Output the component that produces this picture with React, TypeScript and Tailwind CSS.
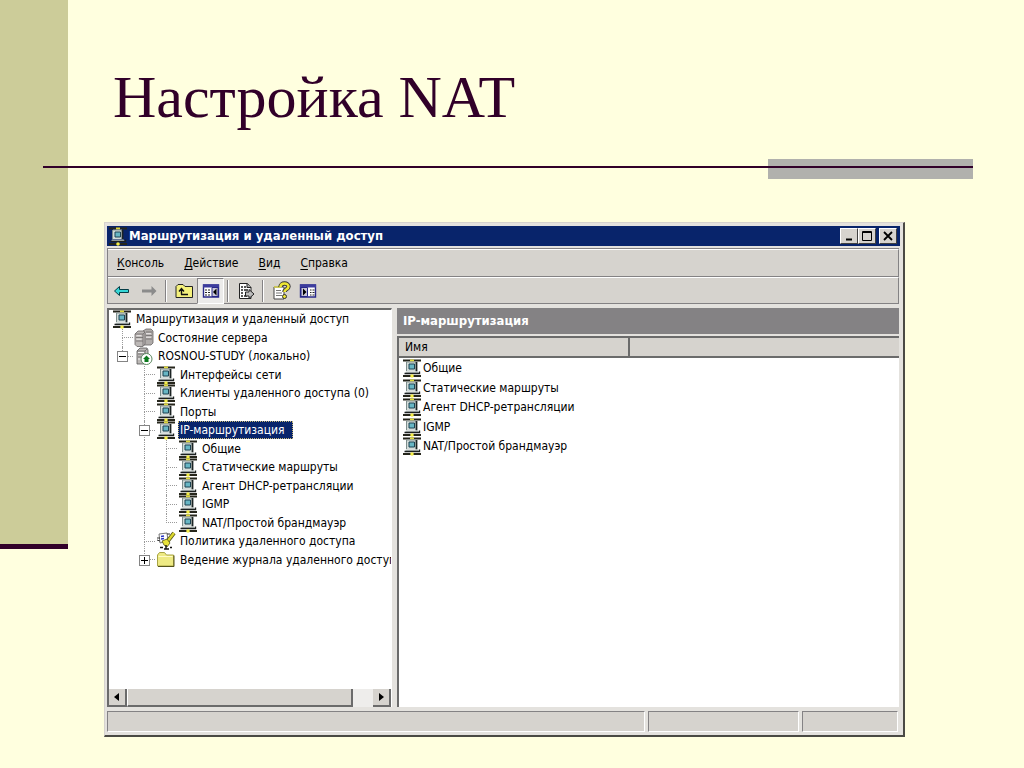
import type { ReactNode } from "react";
import clsx from "clsx";

type Guide = "none" | "line" | "tee" | "corner";
type IconName = "network" | "servers" | "server" | "policy" | "folder";

type TreeRow = {
  label: string;
  icon: IconName;
  guides: Guide[];
  toggle?: "plus" | "minus";
  selected?: boolean;
};

const TREE: TreeRow[] = [
  { label: "Маршрутизация и удаленный доступ", icon: "network", guides: [] },
  { label: "Состояние сервера", icon: "servers", guides: ["tee"] },
  { label: "ROSNOU-STUDY (локально)", icon: "server", guides: ["corner"], toggle: "minus" },
  { label: "Интерфейсы сети", icon: "network", guides: ["none", "tee"] },
  { label: "Клиенты удаленного доступа (0)", icon: "network", guides: ["none", "tee"] },
  { label: "Порты", icon: "network", guides: ["none", "tee"] },
  { label: "IP-маршрутизация", icon: "network", guides: ["none", "tee"], toggle: "minus", selected: true },
  { label: "Общие", icon: "network", guides: ["none", "line", "tee"] },
  { label: "Статические маршруты", icon: "network", guides: ["none", "line", "tee"] },
  { label: "Агент DHCP-ретрансляции", icon: "network", guides: ["none", "line", "tee"] },
  { label: "IGMP", icon: "network", guides: ["none", "line", "tee"] },
  { label: "NAT/Простой брандмауэр", icon: "network", guides: ["none", "line", "corner"] },
  { label: "Политика удаленного доступа", icon: "policy", guides: ["none", "tee"] },
  { label: "Ведение журнала удаленного доступа", icon: "folder", guides: ["none", "corner"], toggle: "plus" },
];

const ITEMS = ["Общие", "Статические маршруты", "Агент DHCP-ретрансляции", "IGMP", "NAT/Простой брандмауэр"];

const MENU = ["Консоль", "Действие", "Вид", "Справка"];

function NetworkIcon() {
  return (
    <svg width="20" height="20" viewBox="0 0 20 20" className="shrink-0" aria-hidden="true">
      <path d="M1 2.500h18M1 18h18" stroke="#26261c" strokeWidth="1.800" />
      <path d="M8 1.500h4v2H8z" fill="#dfd83c" />
      <path d="M5 4h9v9H5z" fill="#d3dcda" />
      <path d="M5 4h9" stroke="#8c9a98" />
      <path d="M4.500 4v9" stroke="#7d8d8b" />
      <path d="M14.500 4v9.500" stroke="#1c2424" strokeWidth="1.800" />
      <path d="M7 6h5.500v5H7z" fill="#67b6c4" stroke="#1d4352" />
      <path d="M4 13.500h11.500l1.500 2H3z" fill="#b9c2c0" />
      <path d="M2.500 15.500h15v-2" stroke="#1c2020" strokeWidth="1.400" fill="none" />
      <circle cx="10" cy="18" r="1.800" fill="#f5ee48" />
    </svg>
  );
}

function ServersIcon() {
  return (
    <svg width="20" height="20" viewBox="0 0 20 20" className="shrink-0" aria-hidden="true">
      <path d="M9 3l3-2h5l2 2v12l-2 2h-8z" fill="#b0acaa" stroke="#6a6666" strokeWidth=".8" />
      <path d="M1 6l3-3h6l1 2v11l-2 2.500H3l-2-2z" fill="#bcb8b6" stroke="#6a6666" strokeWidth=".8" />
      <path d="M1 6h8v12M9 6l2-2M12 4h6M12 7.500h6M12 11h6M2 9.500h7M2 13h7" stroke="#6f6b6b" fill="none" strokeWidth=".8" />
      <path d="M2.500 7.700h5M2.500 11.200h5M12 5.700h5M12 9.200h5" stroke="#efecec" />
    </svg>
  );
}

function ServerIcon() {
  return (
    <svg width="20" height="20" viewBox="0 0 20 20" className="shrink-0" aria-hidden="true">
      <path d="M3 5l3-3h7l1 2v12l-2 2H3z" fill="#bcb8b6" stroke="#555" strokeWidth=".8" />
      <path d="M3 5h8v5M11 5l2-2M4 8h6M4 11h4" stroke="#666" strokeWidth=".8" fill="none" />
      <path d="M4 6.500h6M4 13h3" stroke="#f4f4f4" />
      <circle cx="12.500" cy="13" r="5.500" fill="#fff" stroke="#5d8a62" />
      <path d="M12.500 9.500L16 13h-1.500v3h-4v-3H9z" fill="#0b7a1d" />
    </svg>
  );
}

function PolicyIcon() {
  return (
    <svg width="20" height="20" viewBox="0 0 20 20" className="shrink-0" aria-hidden="true">
      <path d="M3 3l8-1 1 8-8 2z" fill="#fff" stroke="#555" strokeWidth=".8" />
      <path d="M5 5.500l3-.5M5 8l3-.5" stroke="#2834c0" strokeWidth="1.400" />
      <path d="M1 7h3M1 9l3 1M11 3h3" stroke="#333" />
      <path d="M18 2l-7 9" stroke="#55551a" strokeWidth="4" />
      <path d="M18 2l-7 9" stroke="#dcd82e" strokeWidth="2.400" />
      <path d="M6 10l5-2 3 4-3 4-3-2z" fill="#e8e23a" stroke="#55551a" strokeWidth=".8" />
      <path d="M4 16.500h3M8 18h5M14 16.500h2M10 14v4" stroke="#111" strokeWidth="1.400" />
    </svg>
  );
}

function FolderIcon() {
  return (
    <svg width="20" height="20" viewBox="0 0 20 20" className="shrink-0" aria-hidden="true">
      <path d="M1.500 5l2-2.500h5l2 2.500h7v11h-16z" fill="#eeea84" stroke="#a8a443" />
      <path d="M2.500 6.500h14" stroke="#fffcc8" />
      <path d="M2 16.500h16V5.500" stroke="#55531c" fill="none" />
    </svg>
  );
}

const ICONS: Record<IconName, () => ReactNode> = {
  network: NetworkIcon,
  servers: ServersIcon,
  server: ServerIcon,
  policy: PolicyIcon,
  folder: FolderIcon,
};

// One 22px column of the dotted tree connectors.
function GuideCell({ kind, toggle }: { kind: Guide; toggle?: "plus" | "minus" }) {
  return (
    <span className="relative flex w-[22px] shrink-0 flex-col self-stretch pl-[11px]">
      <span
        className={clsx(
          "flex-1 border-dotted border-[#9a9a9a]",
          kind !== "none" && "border-l",
          (kind === "tee" || kind === "corner") && "border-b",
        )}
      />
      <span
        className={clsx("flex-1 border-dotted border-[#9a9a9a]", (kind === "tee" || kind === "line") && "border-l")}
      />
      {toggle && (
        <button
          type="button"
          aria-label={toggle === "minus" ? "Свернуть" : "Развернуть"}
          className="absolute top-1 left-1.5 grid size-[11px] place-items-center border border-[#848484] bg-white"
        >
          <svg width="7" height="7" viewBox="0 0 7 7" stroke="#000">
            <path d={toggle === "plus" ? "M0 3.5h7M3.5 0v7" : "M0 3.5h7"} />
          </svg>
        </button>
      )}
    </span>
  );
}

function TreeItem({ row }: { row: TreeRow }) {
  const Icon = ICONS[row.icon];
  return (
    <li className="flex min-h-0 items-center whitespace-nowrap">
      {row.guides.map((kind, i) => (
        <GuideCell key={i} kind={kind} toggle={i === row.guides.length - 1 ? row.toggle : undefined} />
      ))}
      <span className="flex h-0 w-[22px] shrink-0 items-center justify-center">
        <Icon />
      </span>
      <span
        className={clsx(
          "ml-px px-0.5 leading-[18px]",
          row.selected && "bg-[#08246b] pr-2 text-white outline-1 -outline-offset-1 outline-dotted outline-[#c8b878]",
        )}
      >
        {row.label}
      </span>
    </li>
  );
}

function CaptionButton({ label, children }: { label: string; children: ReactNode }) {
  return (
    <button
      type="button"
      aria-label={label}
      className="grid h-4 w-[18px] place-items-center border border-t-white border-r-[#404040] border-b-[#404040] border-l-white bg-[#d6d3ce]"
    >
      <svg width="12" height="12" viewBox="0 0 12 12" fill="none" stroke="#000">
        {children}
      </svg>
    </button>
  );
}

function ToolButton({ label, pressed, children }: { label: string; pressed?: boolean; children: ReactNode }) {
  return (
    <button
      type="button"
      aria-label={label}
      aria-pressed={pressed}
      className={clsx(
        "grid h-[26px] w-[27px] place-items-center",
        pressed && "border border-t-[#848284] border-r-white border-b-white border-l-[#848284] bg-[#ecebea]",
      )}
    >
      <svg width="20" height="20" viewBox="0 0 20 20">
        {children}
      </svg>
    </button>
  );
}

function Separator() {
  return <span className="mx-[3px] h-[22px] w-0.5 border-r border-l border-r-white border-l-[#848284]" />;
}

function Toolbar() {
  return (
    <div className="flex h-[27px] items-center border-t border-r border-b border-t-white border-r-[#848284] border-b-[#848284]">
      <ToolButton label="Назад">
        <path d="M2.500 10l5-4.500v3h9v3h-9v3z" fill="#35d6d6" stroke="#063c46" />
      </ToolButton>
      <ToolButton label="Вперед">
        <path d="M17.500 10l-5-5v3.500H3v3h9.500V15z" fill="#8b8b8b" />
      </ToolButton>
      <Separator />
      <ToolButton label="Вверх">
        <path d="M2 16.500v-11l2-2h5l2 2h7.500v11z" fill="#f5f17c" stroke="#222" />
        <path d="M7 13.500h7M7.500 13.500v-5M5 10.500l2.500-3 2.500 3" stroke="#111" fill="none" strokeWidth="1.400" />
      </ToolButton>
      <ToolButton label="Дерево консоли" pressed>
        <path d="M2.500 4h15v12h-15z" fill="#fff" stroke="#28288a" strokeWidth="1.400" />
        <path d="M2 3.500h16v3H2z" fill="#3c3c9e" />
        <path d="M4 9h2M4 11.500h2M4 14h2M7 9h2M7 11.500h2M7 14h2" stroke="#222" strokeWidth="1.200" />
        <path d="M11 6.500h6v9h-6z" fill="#c9c7d6" stroke="#28288a" />
        <path d="M15.500 7.500v7L12 11z" fill="#000" />
      </ToolButton>
      <Separator />
      <ToolButton label="Экспорт списка">
        <path d="M3.500 2.500h8l3.500 4v11H3.500z" fill="#fff" stroke="#222" />
        <path d="M11 2.500v4h4" fill="#aaa" stroke="#222" />
        <path d="M5 6h2M5 9h2M5 12h2M5 15h2M8 6h2M8 9h4M8 15h3" stroke="#222" strokeWidth="1.400" />
        <path d="M9.500 11H13V8.500l5 4.500-5 4.500V15H9.500z" fill="#bdbdbd" stroke="#222" />
      </ToolButton>
      <Separator />
      <ToolButton label="Справка">
        <path d="M3 6h10v12H3z" fill="#fff" stroke="#444" />
        <path d="M5 9.500h5M5 12h6M5 14.500h6" stroke="#777" />
        <path d="M3 6h7" stroke="#ddd64a" strokeWidth="1.500" />
        <path d="M9.500 6c0-4.500 8-4.500 8-.5 0 3-4 2.500-4 5.500" fill="none" stroke="#333" strokeWidth="4.400" />
        <path d="M9.500 6c0-4.500 8-4.500 8-.5 0 3-4 2.500-4 5.500" fill="none" stroke="#eee634" strokeWidth="2.600" />
        <circle cx="13.500" cy="15.500" r="2" fill="#eee634" stroke="#333" />
      </ToolButton>
      <ToolButton label="Панель действий">
        <path d="M2.500 4h15v12h-15z" fill="#fff" stroke="#28288a" strokeWidth="1.400" />
        <path d="M2 3.500h16v3H2z" fill="#3c3c9e" />
        <path d="M3 6.500h6.500v9H3z" fill="#c9c7d6" stroke="#28288a" />
        <path d="M12 9h1.500M12 11.500h1.500M12 14h1.500M14.500 9h2M14.500 11.500h2M14.500 14h2" stroke="#222" strokeWidth="1.200" />
        <path d="M5 7.500v7L8.500 11z" fill="#000" />
      </ToolButton>
    </div>
  );
}

function ScrollButton({ label, d }: { label: string; d: string }) {
  return (
    <button
      type="button"
      aria-label={label}
      className="grid w-[18px] place-items-center border-r-2 border-b-2 border-[#6b6b6b] bg-[#d6d3ce]"
    >
      <svg width="8" height="8" viewBox="0 0 8 8">
        <path d={d} />
      </svg>
    </button>
  );
}

function TreePane() {
  return (
    <nav
      aria-label="Дерево консоли"
      className="flex w-[285px] shrink-0 flex-col overflow-hidden border-t-2 border-r border-l-2 border-t-[#6b6b6b] border-r-white border-l-[#6b6b6b] bg-white"
    >
      <ul className="grid h-[259px] auto-rows-fr pl-0.5">
        {TREE.map((row, i) => (
          <TreeItem key={i} row={row} />
        ))}
      </ul>
      <div className="mt-auto flex h-[18px] bg-[#eeedeb]">
        <ScrollButton label="Прокрутить влево" d="M6 0v8L1 4z" />
        <div className="w-[226px] border-r-2 border-b-2 border-l border-r-[#6b6b6b] border-b-[#6b6b6b] border-l-white bg-[#d6d3ce]" />
        <div className="flex-1" />
        <ScrollButton label="Прокрутить вправо" d="M2 0v8l5-4z" />
      </div>
    </nav>
  );
}

function DetailsPane() {
  return (
    <section className="flex min-w-0 flex-1 flex-col">
      <h2 className="h-[26px] bg-[#848284] pl-1.5 text-[13px] leading-[26px] font-bold text-white">
        IP-маршрутизация
      </h2>
      <div className="mt-0.5 flex-1 border-t-2 border-l-2 border-[#6b6b6b] bg-white">
        <table className="h-[118px] w-full table-fixed border-collapse">
          <thead>
            <tr className="h-[19px] bg-[#d6d3ce]">
              <th
                scope="col"
                className="w-[230px] border-r-2 border-b-2 border-[#6b6b6b] p-0 pl-1.5 text-left leading-[16px] font-normal"
              >
                Имя
              </th>
              <td className="border-b-2 border-[#6b6b6b] p-0" />
            </tr>
          </thead>
          <tbody>
            {ITEMS.map((item) => (
              <tr key={item}>
                <td colSpan={2} className="p-0 leading-[16px]">
                  <span className="flex h-4 items-center gap-px pl-[3px]">
                    <NetworkIcon />
                    {item}
                  </span>
                </td>
              </tr>
            ))}
          </tbody>
        </table>
      </div>
    </section>
  );
}

function ConsoleWindow() {
  return (
    <section className="mr-[119px] ml-9 border border-t-[#d6d3ce] border-r-2 border-r-[#4a4a44] border-b-2 border-b-[#4a4a44] border-l-[#d6d3ce] bg-[#e4e2de] px-0.5 py-[3px] font-['DejaVu_Sans_Condensed','DejaVu_Sans',sans-serif] text-[12px] text-black">
      <header className="mr-px flex h-5 items-center bg-[#08246b] pr-[3px] text-white">
        <span className="mr-px ml-px">
          <NetworkIcon />
        </span>
        <h2 className="flex-1 text-[13px] leading-5 font-bold">Маршрутизация и удаленный доступ</h2>
        <CaptionButton label="Свернуть">
          <path d="M3 9.500h6" strokeWidth="2" />
        </CaptionButton>
        <CaptionButton label="Развернуть">
          <path d="M1.500 1.500h9v9h-9zM1 2.500h10" />
        </CaptionButton>
        <span className="w-[3px]" />
        <CaptionButton label="Закрыть">
          <path d="M2 2l8 8M10 2l-8 8" strokeWidth="1.800" />
        </CaptionButton>
      </header>
      <div className="mt-0.5 mr-0.5 border-t border-l border-[#848284] bg-[#d6d3ce]">
        <nav className="flex h-[28px] items-center gap-5 border-t border-r border-b border-t-white border-r-[#848284] border-b-[#848284] pl-[9px]">
          {MENU.map((item) => (
            <button key={item} type="button">
              <span className="underline underline-offset-2">{item[0]}</span>
              {item.slice(1)}
            </button>
          ))}
        </nav>
        <Toolbar />
      </div>
      <main className="mt-1 mr-0.5 flex h-[399px] gap-[5px]">
        <TreePane />
        <DetailsPane />
      </main>
      <footer className="mt-1 mr-[3px] flex h-[21px] gap-[3px]">
        <div className="flex-1 border border-t-[#848284] border-r-white border-b-white border-l-[#848284] bg-[#d6d3ce]" />
        <div className="w-[151px] border border-t-[#848284] border-r-white border-b-white border-l-[#848284] bg-[#d6d3ce]" />
        <div className="w-[96px] border border-t-[#848284] border-r-white border-b-white border-l-[#848284] bg-[#d6d3ce]" />
      </footer>
    </section>
  );
}

export default function App() {
  return (
    <div className="flex min-h-screen items-start bg-[#ffffdf]">
      <aside className="h-[549px] w-[68px] shrink-0 border-b-[5px] border-[#310029] bg-[#cccc99]" />
      <div className="min-w-0 flex-1">
        <h1 className="pt-[65px] pl-[45px] font-['Liberation_Serif',serif] text-[60px] leading-[64px] text-[#310029]">
          Настройка NAT
        </h1>
        {/* Rule starts over the side band */}
        <div className="relative mt-[30px] mr-[51px] -ml-[25px] flex h-5 justify-end">
          <div className="h-5 w-[205px] bg-[#b1b1ad]" />
          <div className="absolute inset-x-0 top-[7px] h-0.5 bg-[#310029]" />
        </div>
        <div className="mt-[43px]">
          <ConsoleWindow />
        </div>
      </div>
    </div>
  );
}
